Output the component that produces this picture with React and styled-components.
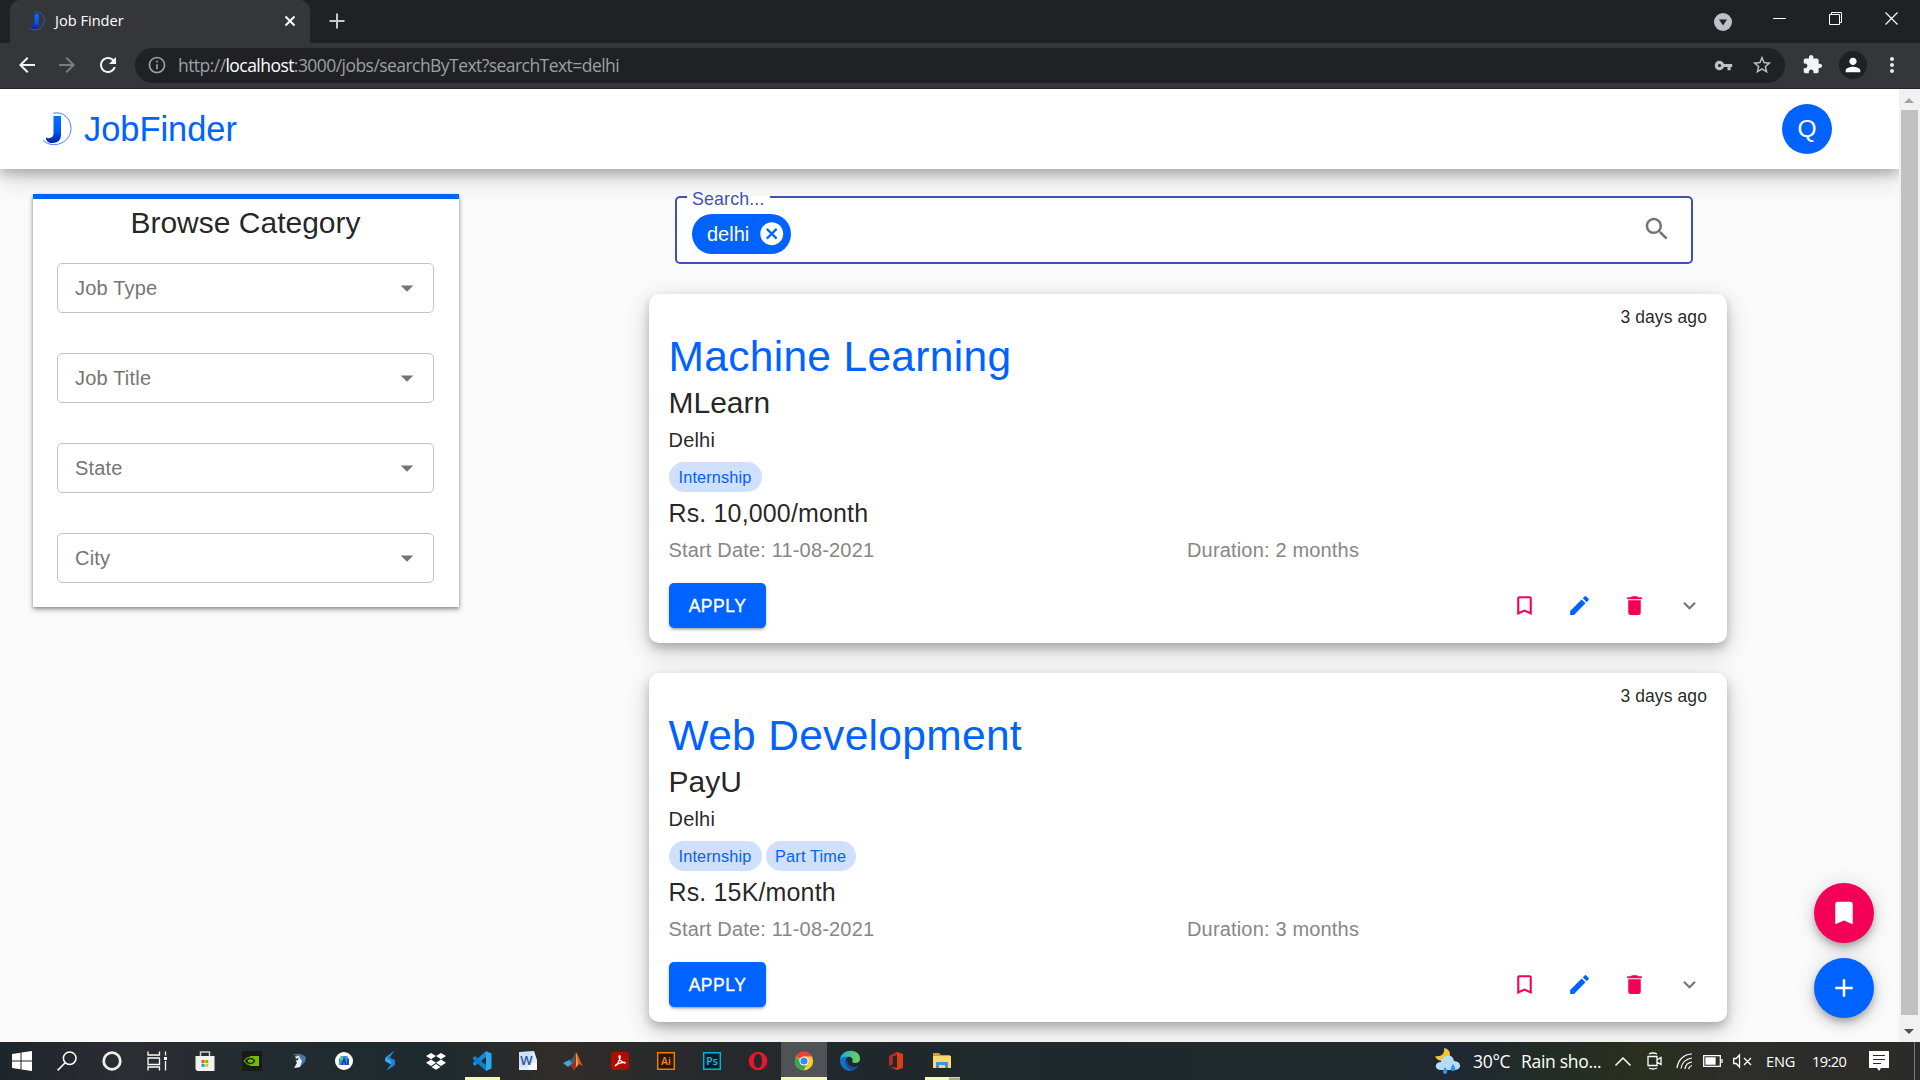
import React from "react";
import styled, { createGlobalStyle } from "styled-components";

const Global = createGlobalStyle`
  * { box-sizing: border-box; }
  body { margin: 0; overflow: hidden; background: #fafafa; }
  svg { display: block; flex: none; overflow: visible; }
`;

const arial = `"Liberation Sans", Arial, sans-serif`;
const segoe = `"Open Sans", "Noto Sans", sans-serif`;
const blue = "#0062ff";
const pink = "#f50057";

/* ---------- browser window ---------- */
const Screen = styled.div`
  width: 1920px; height: 1080px; display: flex; flex-direction: column;
  overflow: hidden; font-family: ${arial};
`;
const TabStrip = styled.div`
  height: 43px; flex: none; background: #202124; display: flex; align-items: center;
  padding-left: 10px;
`;
const Tab = styled.div`
  width: 300px; height: 43px; background: #35363a; border-radius: 10px 10px 0 0;
  display: flex; align-items: center; padding: 0 15px 2px 18px;
`;
const TabTitle = styled.span`
  font: 14.6px ${segoe}; color: #fff; margin-left: 10px; flex: 1; letter-spacing: 0; padding-bottom: 2px;
`;
const NewTab = styled.div` margin-left: 19px; padding-bottom: 1px; flex: 1; `;
const WindowButtons = styled.div`
  display: flex; align-items: center; padding: 0 22px 6px 0; gap: 43px;
`;
const TabSearch = styled.div` padding-top: 6px; margin-right: -2px; `;
const Toolbar = styled.div`
  height: 46px; flex: none; background: #35363a; border-bottom: 1px solid #242528;
  display: flex; align-items: center; padding: 0 17px 2px 15px;
`;
const NavIcons = styled.div` display: flex; gap: 16.300px; width: 120px; flex: none; `;
const AddressBar = styled.div`
  width: 1650px; height: 35px; border-radius: 18px; background: #202124; flex: none;
  display: flex; align-items: center; padding: 0 12px 0 12px; margin-top: 1px;
`;
const Url = styled.span`
  font: 17.5px ${segoe}; color: #9aa0a6; margin-left: 11px; flex: 1;
  letter-spacing: -0.55px; white-space: nowrap;
  b { font-weight: 400; color: #fff; }
`;
const AddressIcons = styled.div` display: flex; gap: 18px; align-items: center; `;
const ToolbarIcons = styled.div`
  display: flex; align-items: center; justify-content: space-between; width: 102px; margin-left: 17px; flex: none;
`;
const Profile = styled.div`
  width: 28px; height: 28px; border-radius: 50%; background: #202124;
  display: flex; align-items: center; justify-content: center; margin-left: 3px;
`;

const Viewport = styled.div` height: 953px; flex: none; display: flex; background: #fafafa; `;
const Page = styled.div` position: relative; width: 1899px; height: 953px; overflow: hidden; `;
const ScrollBar = styled.div`
  width: 21px; height: 953px; background: #f1f1f1; display: flex; flex-direction: column;
  align-items: center; padding: 0 1px 0 0;
`;
const ScrollArrow = styled.div`
  height: 21px; display: flex; align-items: center; justify-content: center; padding-top: ${(p) => p.$drop || 0}px;
`;
const Thumb = styled.div` width: 17px; height: 905px; background: #c1c1c1; `;

/* ---------- site ---------- */
const softShadow = `0 5px 10px rgba(0,0,0,.2), 0 7.5px 25px rgba(0,0,0,.19)`;
const Header = styled.header`
  height: 80px; background: #fff; box-shadow: ${softShadow};
  display: flex; align-items: center; padding: 0 67px 0 42px;
`;
const Brand = styled.span`
  font-size: 34.4px; color: ${blue}; margin-left: 12px; flex: 1; line-height: 44px;
`;
const Avatar = styled.div`
  width: 50px; height: 50px; border-radius: 50%; background: ${blue}; color: #fff;
  display: flex; align-items: center; justify-content: center; font-size: 24.500px;
`;
const Content = styled.main` display: flex; padding: 25px 0 0 33px; align-items: flex-start; `;
const Sidebar = styled.aside`
  width: 426px; height: 413px; background: #fff; border-top: 5px solid ${blue};
  padding: 4px 25px 0 24px; display: flex; flex-direction: column;
  box-shadow: 0 2.5px 5px rgba(0,0,0,.35), 0 1px 3px rgba(0,0,0,.2);
`;
const SidebarTitle = styled.h2`
  margin: 0 0 20px; font-size: 30px; line-height: 40px; font-weight: 400; text-align: center;
  color: rgba(0,0,0,.87);
`;
const SelectBox = styled.div`
  height: 50px; margin-bottom: 40px; border: 1px solid #c4c4c4; border-radius: 5px; flex: none;
  display: flex; align-items: center; justify-content: space-between; padding: 0 11px 0 17px;
  font-size: 20px; letter-spacing: .19px; color: #757575;
`;
const Results = styled.section` margin-left: 190px; width: 1078px; `;
const SearchField = styled.fieldset`
  margin: -9px 34px 30px 26px; height: 79px; padding: 0 19px 0 15px; border: 2px solid #3f51b5;
  border-radius: 5px; min-width: 0; background: #fff;
  legend {
    padding: 4px 5px 0 5px; margin-left: -5px; font-size: 17.8px; line-height: 20px; color: #3f51b5;
    letter-spacing: .15px;
  }
`;
const SearchRow = styled.div` display: flex; justify-content: space-between; height: 42px; padding-top: 5px; `;
const SearchChip = styled.div`
  width: 99px; height: 40px; border-radius: 20px; background: ${blue}; color: #fff; font-size: 20px;
  display: flex; align-items: center; justify-content: space-between; padding: 0 6px 0 15px;
`;
const Card = styled.article`
  height: 349px; margin-bottom: 30px; border-radius: 10px; background: #fff; padding: 11px 20px 0;
  box-shadow: ${softShadow}; color: rgba(0,0,0,.87);
`;
const Posted = styled.div` text-align: right; font-size: 17.5px; line-height: 25px; letter-spacing: .1px; `;
const JobTitle = styled.h1`
  margin: 1px 0 0 -0.5px; font-size: 42.5px; line-height: 52px; font-weight: 400; letter-spacing: .31px; color: ${blue};
`;
const Company = styled.div` font-size: 30px; line-height: 40px; margin-left: -0.5px; `;
const Place = styled.div` font-size: 20px; line-height: 30px; letter-spacing: .19px; margin: 2px 0 0 -0.5px; `;
const Tags = styled.div` display: flex; gap: 4px; margin-top: 7px; `;
const Tag = styled.span`
  height: 30px; line-height: 30px; border-radius: 15px; padding: 0 10px 0 9.5px; background: #d0e0fc; color: ${blue};
  font-size: 16.25px; letter-spacing: .17px;
`;
const Pay = styled.div` font-size: 25px; line-height: 40px; letter-spacing: .15px; margin: 1px 0 0 -0.5px; `;
const Dates = styled.div`
  display: grid; grid-template-columns: 518.500px 1fr; font-size: 20px; line-height: 30px; letter-spacing: .17px;
  color: #868686; margin: 2px 0 0 -0.5px;
`;
const Actions = styled.div` display: flex; align-items: center; margin-top: 18px; padding-right: 5px; gap: 30px; `;
const Apply = styled.button`
  width: 97px; height: 45px; border: 0; border-radius: 5px; background: ${blue}; color: #fff; padding: 1px 0 0;
  font: 17.5px ${arial}; letter-spacing: .5px; margin-right: auto; -webkit-text-stroke: .35px #fff;
  box-shadow: 0 3px 2px -2px rgba(0,0,0,.2), 0 2px 3px rgba(0,0,0,.14), 0 1px 5px rgba(0,0,0,.12);
`;
const FloatingButtons = styled.div`
  position: absolute; right: 25px; bottom: 24px; display: flex; flex-direction: column; gap: 15px;
`;
const Fab = styled.div`
  width: 60px; height: 60px; border-radius: 50%; background: ${(p) => p.$color};
  display: flex; align-items: center; justify-content: center;
  box-shadow: 0 4px 6px -1px rgba(0,0,0,.2), 0 7px 12px rgba(0,0,0,.14), 0 1px 22px rgba(0,0,0,.12);
`;

/* ---------- taskbar ---------- */
const Taskbar = styled.footer`
  height: 38px; flex: none; display: flex; color: #fff; font-family: ${segoe};
  background: linear-gradient(90deg, #1d262b 0, #2d2c33 130px, #232c30 240px, #1e2a2e 430px, #302d2a 560px, #282a2c 680px, #20282b 900px, #1f292d 1100px, #202a2c 1390px, #202834 1450px, #212c27 1530px, #2a2f1e 1640px, #2d2d29 1720px, #2b2b2b 1920px);
`;
const Slots = styled.div` display: flex; `;
const Slot = styled.div`
  width: ${(p) => p.$w || 46}px; height: 38px; display: flex; align-items: center; justify-content: center;
  margin: 0 ${(p) => p.$m || 0}px;
  background: ${(p) => (p.$active ? "#505356" : "transparent")};
  border-bottom: 3px solid ${(p) => (p.$open ? "#f3ffa8" : "transparent")};
  border-top: 3px solid transparent;
`;
const Tray = styled.div` display: flex; align-items: center; margin-left: auto; width: 488px; `;
const TrayText = styled.span`
  font-size: ${(p) => p.$size}px; letter-spacing: ${(p) => p.$track}px; width: ${(p) => p.$w}px; white-space: nowrap; flex: none;
`;
const TrayIcon = styled.div` width: ${(p) => p.$w}px; display: flex; justify-content: center; flex: none; `;
const WeatherIcon = styled(TrayIcon)` margin-right: 9px; `;
const ShowDesktop = styled.div` width: 6px; height: 38px; border-left: 1px solid #777; margin-left: auto; `;

const Glyph = ({ d, size = 24, color = "#fff", box = 24 }) => (
  <svg width={size} height={size} viewBox={`0 0 ${box} ${box}`} fill={color}><path d={d} /></svg>
);

const paths = {
  search: "M15.5 14h-.79l-.28-.27C15.41 12.59 16 11.11 16 9.5 16 5.91 13.09 3 9.5 3S3 5.91 3 9.5 5.91 16 9.5 16c1.61 0 3.09-.59 4.23-1.57l.27.28v.79l5 4.99L20.49 19l-4.99-5zm-6 0C7.01 14 5 11.99 5 9.5S7.01 5 9.5 5 14 7.01 14 9.5 11.99 14 9.5 14z",
  cancel: "M12 2C6.47 2 2 6.47 2 12s4.47 10 10 10 10-4.47 10-10S17.53 2 12 2zm5 13.59L15.59 17 12 13.41 8.41 17 7 15.59 10.59 12 7 8.41 8.41 7 12 10.59 15.59 7 17 8.41 13.41 12 17 15.59z",
  drop: "M7 10l5 5 5-5z",
  bookmark: "M17 3H7c-1.1 0-1.99.9-1.99 2L5 21l7-3 7 3V5c0-1.1-.9-2-2-2z",
  bookmarkBorder: "M17 3H7c-1.1 0-1.99.9-1.99 2L5 21l7-3 7 3V5c0-1.1-.9-2-2-2zm0 15l-5-2.18L7 18V5h10v13z",
  edit: "M3 17.25V21h3.75L17.81 9.94l-3.75-3.75L3 17.25zM20.71 7.04c.39-.39.39-1.02 0-1.41l-2.34-2.34c-.39-.39-1.02-.39-1.41 0l-1.83 1.83 3.75 3.75 1.83-1.83z",
  trash: "M6 19c0 1.1.9 2 2 2h8c1.1 0 2-.9 2-2V7H6v12zM19 4h-3.5l-1-1h-5l-1 1H5v2h14V4z",
  expand: "M16.59 8.59L12 13.17 7.41 8.59 6 10l6 6 6-6z",
  add: "M19 13h-6v6h-2v-6H5v-2h6V5h2v6h6v2z",
  back: "M20 11H7.83l5.59-5.59L12 4l-8 8 8 8 1.41-1.41L7.83 13H20v-2z",
  forward: "M12 4l-1.41 1.41L16.17 11H4v2h12.17l-5.58 5.59L12 20l8-8z",
  reload: "M17.65 6.35C16.2 4.9 14.21 4 12 4c-4.42 0-7.99 3.58-7.99 8s3.57 8 7.99 8c3.73 0 6.84-2.55 7.73-6h-2.08c-.82 2.33-3.04 4-5.65 4-3.31 0-6-2.69-6-6s2.69-6 6-6c1.66 0 3.14.69 4.22 1.78L13 11h7V4l-2.35 2.35z",
  info: "M11 17h2v-6h-2v6zm1-15C6.48 2 2 6.48 2 12s4.48 10 10 10 10-4.48 10-10S17.52 2 12 2zm0 18c-4.41 0-8-3.59-8-8s3.59-8 8-8 8 3.59 8 8-3.59 8-8 8zM11 9h2V7h-2v2z",
  key: "M12.65 10C11.83 7.67 9.61 6 7 6c-3.31 0-6 2.69-6 6s2.69 6 6 6c2.61 0 4.83-1.67 5.65-4H17v4h4v-4h2v-4H12.65zM7 14c-1.1 0-2-.9-2-2s.9-2 2-2 2 .9 2 2-.9 2-2 2z",
  star: "M22 9.24l-7.19-.62L12 2 9.19 8.63 2 9.24l5.46 4.73L5.82 21 12 17.27 18.18 21l-1.63-7.03L22 9.24zM12 15.4l-3.76 2.27 1-4.28-3.32-2.88 4.38-.38L12 6.1l1.71 4.04 4.38.38-3.32 2.88 1 4.28L12 15.4z",
  puzzle: "M20.5 11H19V7c0-1.1-.9-2-2-2h-4V3.5C13 2.12 11.88 1 10.5 1S8 2.12 8 3.5V5H4c-1.1 0-1.99.9-1.99 2v3.8H3.5c1.49 0 2.7 1.21 2.7 2.7s-1.21 2.7-2.7 2.7H2V20c0 1.1.9 2 2 2h3.8v-1.5c0-1.49 1.21-2.7 2.7-2.7 1.49 0 2.7 1.21 2.7 2.7V22H17c1.1 0 2-.9 2-2v-4h1.5c1.38 0 2.5-1.12 2.5-2.5S21.88 11 20.5 11z",
  person: "M12 12c2.21 0 4-1.79 4-4s-1.79-4-4-4-4 1.79-4 4 1.79 4 4 4zm0 2c-2.67 0-8 1.34-8 4v2h16v-2c0-2.66-5.33-4-8-4z",
  dots: "M12 8c1.1 0 2-.9 2-2s-.9-2-2-2-2 .9-2 2 .9 2 2 2zm0 2c-1.1 0-2 .9-2 2s.9 2 2 2 2-.9 2-2-.9-2-2-2zm0 6c-1.1 0-2 .9-2 2s.9 2 2 2 2-.9 2-2-.9-2-2-2z",
};

/* A heavy J with a thin arc swept round its right side. */
const Logo = ({ w, h, id, arc = 1 }) => (
  <svg width={w} height={h} viewBox="0 0 30 34">
    <defs>
      <linearGradient id={id} x1="0" y1="0" x2="0" y2="1">
        <stop offset="0" stopColor="#0a6cff" /><stop offset=".55" stopColor="#005af8" /><stop offset="1" stopColor="#0020a0" />
      </linearGradient>
    </defs>
    <path d="M11.500 4h7.500v19c0 5-3.500 8-8.500 8-4 0-7-2-6.500-5.500 3 1.500 7.500.5 7.500-4z" fill={`url(#${id})`} />
    <path d="M11 1.200C22-1 29 7 29 16.500 29 30 12 38 1 28.500" fill="none" stroke="#4a80ee" strokeWidth={arc} />
  </svg>
);

/* ---------- taskbar drawings ---------- */
const I = ({ children, s = 20, v = 20 }) => <svg width={s} height={s} viewBox={`0 0 ${v} ${v}`}>{children}</svg>;
const Label = ({ x, y, size, fill, children }) => (
  <text x={x} y={y} fontSize={size} fill={fill} textAnchor="middle" fontWeight="600" fontFamily="Open Sans">{children}</text>
);
const apps = [
  { n: "windows", w: 44, el: <I><path fill="#fff" d="M0 3l8.500-1.200v7.700H0zM9.500 1.600L20 0v9.500H9.500zM0 10.500h8.500v7.800L0 17zM9.500 10.500H20V20L9.500 18.400z" /></I> },
  { n: "find", w: 46, el: <I><g fill="none" stroke="#fff" strokeWidth="1.500"><circle cx="12.700" cy="7.200" r="6.300" /><path d="M8.200 11.800L.6 19.400" /></g></I> },
  { n: "cortana", w: 44, el: <I><circle cx="10" cy="10" r="8.300" fill="none" stroke="#eee" strokeWidth="2.800" /></I> },
  { n: "tasks", w: 46, el: <I><g fill="none" stroke="#fff" strokeWidth="1.300"><path d="M1 .5v3.500h11.500V.5M1 19.500V16h11.500v3.500M1 7h11.500v6.500H1zM18.500 .5v4M18.500 10v9.500" /></g><path fill="#fff" d="M17 6h3v3h-3z" /></I> },
  { n: "store", w: 49, el: <I><path d="M5.500 5V1h9v4" fill="none" stroke="#ccc" strokeWidth="1.500" /><path d="M.5 5h19v15H2L.5 18z" fill="#f2f2f2" /><path fill="#f25022" d="M6.500 9h3v3h-3z" /><path fill="#7fba00" d="M10.300 9h3v3h-3z" /><path fill="#00a4ef" d="M6.500 12.800h3v3h-3z" /><path fill="#ffb900" d="M10.300 12.800h3v3h-3z" /></I> },
  { n: "nvidia", el: <I><path fill="#191b19" d="M0 0h20v20H0z" /><path fill="#76b900" d="M8 5h9v10H8z" /><path d="M2 10c3-5 9-5 12 0-3 5-9 5-12 0z" fill="#24380a" stroke="#76b900" /><path d="M5 10c2-3 5-3 7 0-2 3-5 3-7 0z" fill="#76b900" stroke="#1c2c06" /></I> },
  { n: "bird", el: <I><path d="M5 4q4-2 9-.5l4 2.500-1 5-5 5-5 1 2-6-1-3z" fill="#4677a8" /><path d="M7 8l5-1 2 3-2 6-6 1 3-5z" fill="#e7eef4" /><path d="M1 6l6-2 4 2-1 3-4 1-2-2z" fill="#2a3038" /><path d="M7 5.500l4-.8 1 2-4 1z" fill="#d8e5f0" /></I> },
  { n: "studio", el: <I><circle cx="10" cy="10" r="9" fill="#fff" /><path d="M5 14V8l2-3h6l2 3v6z" fill="#3f86e8" /><path d="M6 6l3-1v4H6z" fill="#3ddc84" /><path d="M8 14l2-6 2 6M14 8v6" stroke="#123b70" strokeWidth="1.300" fill="none" /></I> },
  { n: "bolt", el: <I><path d="M14 0L5.500 6.500 5 10l6 3.500-4.500 6L14.500 14l.5-4.500-5.500-3z" fill="#37b4f2" /><path d="M14 0L9.500 6.500l5.500 3-.5 4.500-8 5.500 4.500-6L11 10 6.500 7z" fill="#1f7fdc" /></I> },
  { n: "dropbox", el: <I><path fill="#fff" d="M5 2l5 3-5 3.300L0 5zM15 2l5 3-5 3.300L10 5zM5 8.600l5 3.200-5 3.200L0 11.800zM15 8.600l5 3.200-5 3.200-5-3.200zM10 13l4.500 3-4.500 2.800L5.500 16z" /></I> },
  { n: "code", open: 1, w: 35, m: 5.5, el: <I><path d="M14 0v6L3 15l-2-1.500v-1.700z" fill="#1289d8" /><path d="M14 20v-6L3 5 1 6.500v1.700z" fill="#0d7fca" /><path d="M14 0l5.500 2.500v15L14 20z" fill="#2ba8f0" /></I> },
  { n: "word", w: 45, el: <I><path d="M1 1l15-1 3 9v10H1z" fill="#e5edf8" /><path d="M1 1h14v15H1z" fill="#d0e0f5" /><path d="M10 12h9v7h-8z" fill="#fff" /><Label x="8.500" y="13.500" size="13" fill="#1c57a8">W</Label></I> },
  { n: "matlab", el: <I><path d="M0 12l6-3 4 3-5 4z" fill="#4ba3cf" /><path d="M6 9l3-1 4-7-3 13-5 2 4-4z" fill="#26668f" /><path d="M13 1c3 4 4 10 7 14l-4-2-5 6-3-4c3-3 4-9 5-14z" fill="#dc5523" /><path d="M13 1c1 6 1 10-1 17l-1 1-3-4c3-3 4-9 5-14z" fill="#9b2f19" /><path d="M13 1c1.500 5 2 9 2 13l-2 2z" fill="#f59b45" /></I> },
  { n: "acrobat", w: 47, el: <I><rect x="1" y="1" width="18" height="18" rx="3" fill="#b30b00" /><path d="M5 15c2-1 6-7 5-10-2-2-1 6 5 7 2-1-7-1-10 3z" fill="none" stroke="#fff" strokeWidth="1.300" /></I> },
  { n: "ai", el: <I><path d="M1.700 1.700h16.600v16.600H1.700z" fill="#2a1500" stroke="#e77f00" strokeWidth="1.500" /><Label x="10" y="13.500" size="10.500" fill="#f78a10">Ai</Label></I> },
  { n: "ps", el: <I><path d="M1.700 1.700h16.600v16.600H1.700z" fill="#001d2b" stroke="#00b3dd" strokeWidth="1.500" /><Label x="10" y="13.500" size="10.500" fill="#17c2ee">Ps</Label></I> },
  { n: "opera", el: <I><path fillRule="evenodd" d="M10 .7a9.300 9.300 0 100 18.600A9.300 9.300 0 0010 .7zM10 3c3 0 4 3 4 7s-1.500 7-4 7-4-3-4-7 1.500-7 4-7z" fill="#e5152c" /></I> },
  { n: "chrome", active: 1, open: 1, el: <I><circle cx="10" cy="10" r="9.200" fill="#fcc934" /><path d="M10 10L2 5.400A9.200 9.200 0 0118 5.600H10z" fill="#ea4335" /><path d="M2 5.400A9.200 9.200 0 009.500 19.200l4-7L10 14z" fill="#34a853" /><circle cx="10" cy="10" r="4.600" fill="#fff" /><circle cx="10" cy="10" r="3.600" fill="#4285f4" /></I> },
  { n: "edge", el: <I><defs><linearGradient id="eg"><stop offset="0" stopColor="#1ea6e8" /><stop offset="1" stopColor="#6bd850" /></linearGradient></defs><path d="M0 9C1-3 20-3 20 8c0 4-5 5-8 3 2-3-1-6-5-5-3 0-6 1-7 3z" fill="url(#eg)" /><path d="M0 9c1-3 5-4 8-3-4 2-3 9 1 10 4 2 7 0 9-1-4 8-18 6-18-6z" fill="#1073c8" /><path d="M7 8c-3 5 1 12 7 11 2-1 4-3 4-4-4 2-11 1-11-7z" fill="#124f9c" /></I> },
  { n: "office", w: 45, el: <I><path fillRule="evenodd" d="M3 5l8-4 6 2v14l-6 2-7-3 7 .7V4L6.500 5.500v8L3 15z" fill="#dc3e15" /><path d="M3 5l8-4v3L6.500 5.500v8L3 15z" fill="#b5272d" /></I> },
  { n: "files", open: 1, w: 35, m: 6.5, el: <I><path d="M1 2h6l2 2h9v4H1z" fill="#d9a014" /><path d="M1 5h18v12H1z" fill="#ffd96b" /><path d="M4 17v-6h12v6h-3v-3H7v3z" fill="#3f95dc" /><path d="M17 26h11v3H17z" transform="translate(0 .5)" fill="#a9b077" /></I> },
];

const Weather = () => (
  <svg width="30" height="28" viewBox="0 0 30 28">
    <path d="M11 1c8 1 8 11 0 13-5 0-8-2-9-5 6 1 10-2 9-8z" fill="#f9c22e" />
    <path d="M8 23c-7 0-7-8 0-8 1-8 12-9 13-1 8 0 8 9 1 9z" fill="#b5dcf7" />
    <path d="M12 20c-2 3-3 7 0 7s3-4 0-7zM20 17c-3 4-3 7 0 7s3-3 0-7z" fill="#3391e6" />
  </svg>
);
const Line = ({ w = 20, h = 20, d, sw = 1.3, children }) => (
  <svg width={w} height={h} viewBox={`0 0 ${w} ${h}`} fill="none" stroke="#fff" strokeWidth={sw}><path d={d} />{children}</svg>
);

const jobs = [
  { title: "Machine Learning", company: "MLearn", tags: ["Internship"], pay: "Rs. 10,000/month", months: 2 },
  { title: "Web Development", company: "PayU", tags: ["Internship", "Part Time"], pay: "Rs. 15K/month", months: 3 },
];

function JobCard({ job }) {
  return (
    <Card>
      <Posted>3 days ago</Posted>
      <JobTitle>{job.title}</JobTitle>
      <Company>{job.company}</Company>
      <Place>Delhi</Place>
      <Tags>{job.tags.map((t) => <Tag key={t}>{t}</Tag>)}</Tags>
      <Pay>{job.pay}</Pay>
      <Dates><span>Start Date: 11-08-2021</span><span>Duration: {job.months} months</span></Dates>
      <Actions>
        <Apply>APPLY</Apply>
        <Glyph d={paths.bookmarkBorder} size={25} color={pink} />
        <Glyph d={paths.edit} size={25} color={blue} />
        <Glyph d={paths.trash} size={25} color={pink} />
        <Glyph d={paths.expand} size={25} color="#757575" />
      </Actions>
    </Card>
  );
}

export default function App() {
  return (
    <Screen>
      <Global />
      <TabStrip>
        <Tab>
          <Logo w={17} h={20} id="fav" arc={0.8} />
          <TabTitle>Job Finder</TabTitle>
          <Line w={10} h={10} sw={2} d="M.5 .5l9 9M9.500 .5l-9 9" />
        </Tab>
        <NewTab><svg width="16" height="16" stroke="#c6c8cb" strokeWidth="2"><path d="M8 .5v15M.5 8h15" /></svg></NewTab>
        <WindowButtons>
          <TabSearch><svg width="18" height="18"><circle cx="9" cy="9" r="9" fill="#bdc1c6" /><path d="M5 6.500h8l-4 6z" fill="#202124" /></svg></TabSearch>
          <Line w={13} h={13} sw={1} d="M0 6.500h13" />
          <Line w={13} h={13} sw={1} d="M.5 2.500h10v10H.5zM2.500 2.500v-2h10v10h-2" />
          <Line w={13} h={13} sw={1.200} d="M.5 .5l12 12M12.500 .5l-12 12" />
        </WindowButtons>
      </TabStrip>
      <Toolbar>
        <NavIcons>
          <Glyph d={paths.back} color="#f1f3f4" />
          <Glyph d={paths.forward} color="#7b7d81" />
          <Glyph d={paths.reload} color="#f1f3f4" />
        </NavIcons>
        <AddressBar>
          <Glyph d={paths.info} size={20} color="#9aa0a6" />
          <Url>http://<b>localhost</b>:3000/jobs/searchByText?searchText=delhi</Url>
          <AddressIcons>
            <Glyph d={paths.key} size={19} color="#bdc1c6" />
            <Glyph d={paths.star} size={22} color="#bdc1c6" />
          </AddressIcons>
        </AddressBar>
        <ToolbarIcons>
          <Glyph d={paths.puzzle} size={21} color="#f1f3f4" />
          <Profile><Glyph d={paths.person} size={22} /></Profile>
          <Glyph d={paths.dots} size={24} color="#e8eaed" />
        </ToolbarIcons>
      </Toolbar>
      <Viewport>
        <Page>
          <Header>
            <Logo w={30} h={34} id="brand" />
            <Brand>JobFinder</Brand>
            <Avatar>Q</Avatar>
          </Header>
          <Content>
            <Sidebar>
              <SidebarTitle>Browse Category</SidebarTitle>
              {["Job Type", "Job Title", "State", "City"].map((name) => (
                <SelectBox key={name}>{name}<Glyph d={paths.drop} size={30} color="#757575" /></SelectBox>
              ))}
            </Sidebar>
            <Results>
              <SearchField>
                <legend>Search...</legend>
                <SearchRow>
                  <SearchChip>delhi<Glyph d={paths.cancel} size={27.5} /></SearchChip>
                  <Glyph d={paths.search} size={30} color="#757575" />
                </SearchRow>
              </SearchField>
              {jobs.map((job) => <JobCard key={job.title} job={job} />)}
            </Results>
          </Content>
          <FloatingButtons>
            <Fab $color={pink}><Glyph d={paths.bookmark} size={30} /></Fab>
            <Fab $color={blue}><Glyph d={paths.add} size={30} /></Fab>
          </FloatingButtons>
        </Page>
        <ScrollBar>
          <ScrollArrow $drop={2}><svg width="10" height="5"><path d="M0 5l5-5 5 5z" fill="#a3a3a3" /></svg></ScrollArrow>
          <Thumb />
          <ScrollArrow $drop={11}><svg width="10" height="5"><path d="M0 0l5 5 5-5z" fill="#505050" /></svg></ScrollArrow>
        </ScrollBar>
      </Viewport>
      <Taskbar>
        <Slots>
          {apps.map((a) => <Slot key={a.n} $w={a.w} $m={a.m} $active={a.active} $open={a.open}>{a.el}</Slot>)}
        </Slots>
        <Tray>
          <WeatherIcon $w={32}><Weather /></WeatherIcon>
          <TrayText $size={17.5} $track={-0.3} $w={48}>30°C</TrayText>
          <TrayText $size={17.5} $track={-0.3} $w={86}>Rain sho...</TrayText>
          <TrayIcon $w={32}><Line w={16} h={9} sw={1.500} d="M.5 8.500L8 1l7.500 7.500" /></TrayIcon>
          <TrayIcon $w={30}><Line w={15} h={18} d="M1 4.500h9v9H1zM10 8l4-2.500v7L10 10M2 2q4-2 8 0M2 16q4 2 8 0" /></TrayIcon>
          <TrayIcon $w={30}><Line w={17} h={17} sw={1.200} d="M1 15C2 7 8 1 16 1M5 15.500C6 9 9.500 6 16 5M9 16c.5-4 3-6.500 7-7M12.500 16c.5-2 1.500-3 3.500-3.500" /></TrayIcon>
          <TrayIcon $w={28}><Line w={20} h={12} d="M.7 .7h16.600v10.600H.7zM19 4v4"><path d="M3 3h9v6H3z" fill="#fff" /></Line></TrayIcon>
          <TrayIcon $w={30}><Line w={19} h={14} d="M.7 4.500h2.500L6.500 1v12L3.200 9.500H.7zM11 4l7 7M18 4l-7 7" /></TrayIcon>
          <TrayIcon $w={9} />
          <TrayText $size={14.6} $track={-0.2} $w={46}>ENG</TrayText>
          <TrayText $size={14.6} $track={-0.6} $w={57}>19:20</TrayText>
          <svg width="20" height="20"><path d="M0 0h20v17h-8l-2 3-2-3H0z" fill="#fff" /><path d="M4 4.500h12M4 8.500h12M4 12.500h8" stroke="#2b2b2b" /></svg>
          <ShowDesktop />
        </Tray>
      </Taskbar>
    </Screen>
  );
}
